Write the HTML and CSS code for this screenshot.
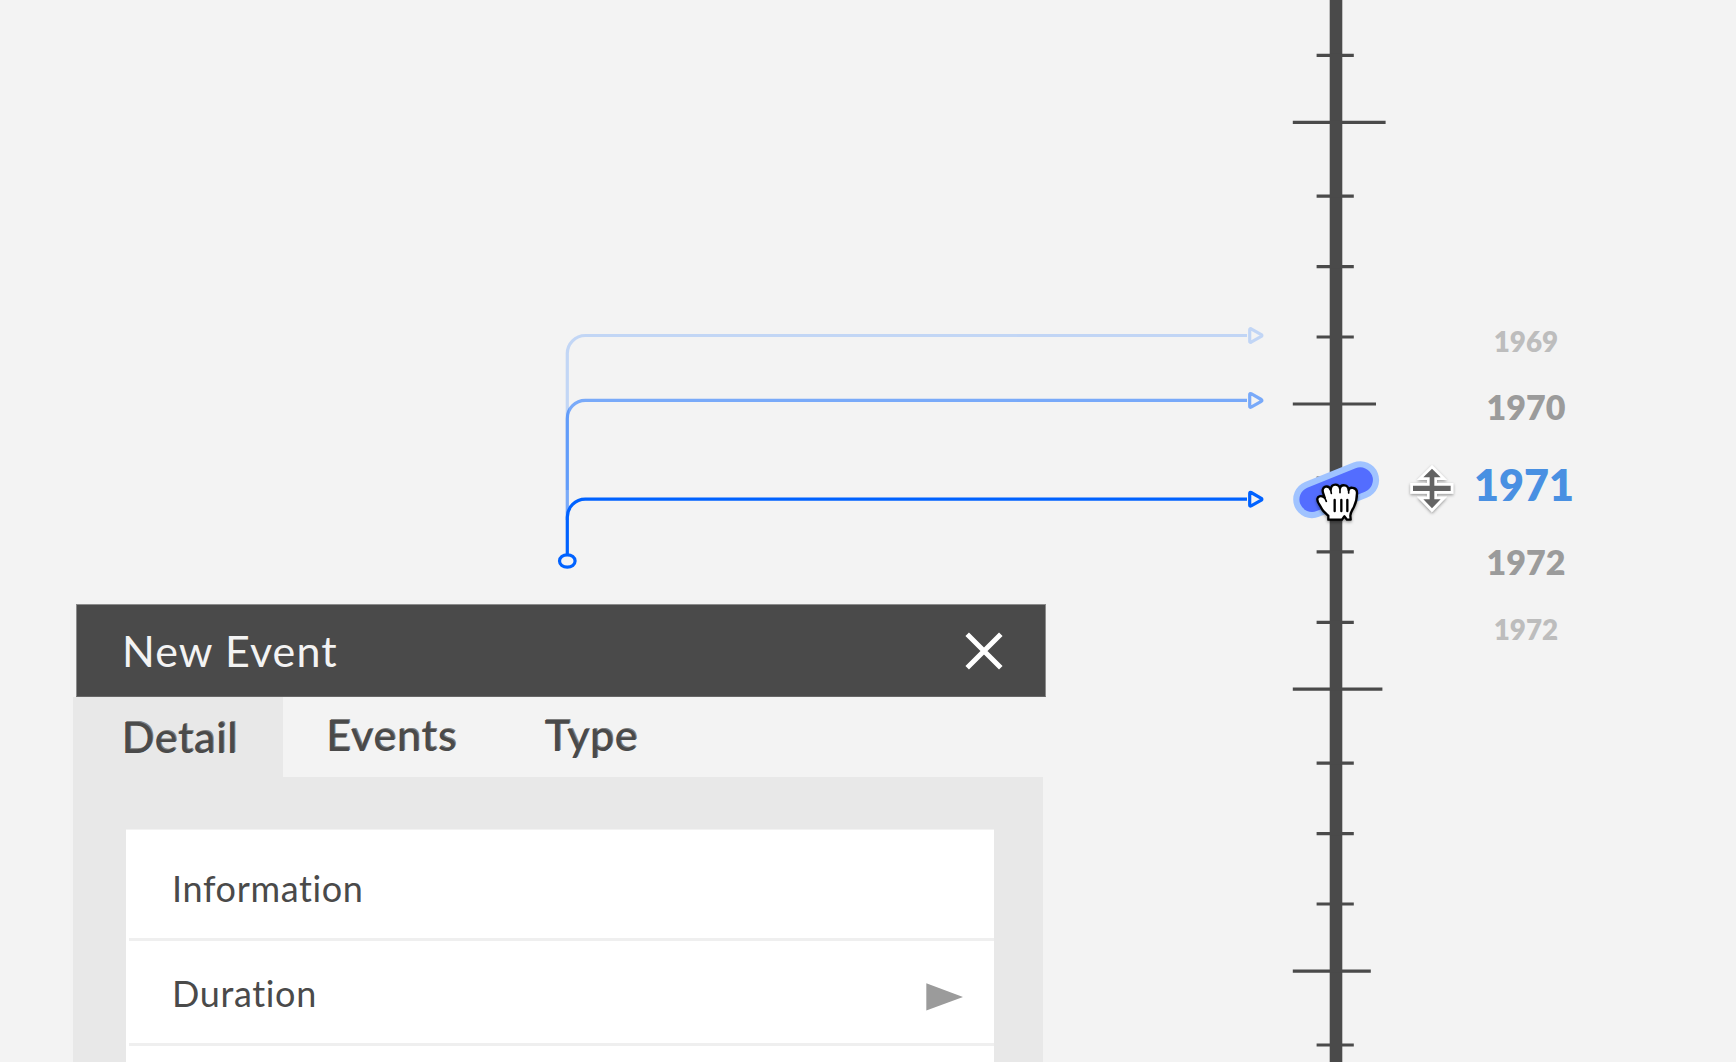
FILE: index.html
```html
<!DOCTYPE html>
<html lang="en">
<head>
<meta charset="utf-8">
<title>New Event</title>
<link rel="stylesheet" href="styles.css">
</head>
<body>
<main class="scene">
  <section class="workspace">
    <svg class="connectors" width="1280" height="604" viewBox="0 0 1280 604" fill="none" stroke="#0062ff" stroke-width="3.2" stroke-linejoin="round">
      <g opacity=".2">
        <path d="M567.3 490V353.5a18 18 0 0 1 18-18H1247"/>
        <path d="M1249.7 329.7v11.6q0 1.5 1.4.9l10.2-5.8q1.2-.9 0-1.8l-10.2-5.8q-1.4-.6-1.4.9z"/>
      </g>
      <g opacity=".5">
        <path d="M567.3 520V418.4a18 18 0 0 1 18-18H1247"/>
        <path d="M1249.7 394.6v11.6q0 1.5 1.4.9l10.2-5.8q1.2-.9 0-1.8l-10.2-5.8q-1.4-.6-1.4.9z"/>
      </g>
      <path d="M567.3 554V517.2a18 18 0 0 1 18-18H1247"/>
      <path d="M1249.7 493.4v11.6q0 1.5 1.4.9l10.2-5.8q1.2-.9 0-1.8l-10.2-5.8q-1.4-.6-1.4.9z"/>
      <ellipse cx="567.3" cy="561" rx="7.8" ry="6.2"/>
    </svg>
    <div class="dialog">
      <header class="dialog-header">
        <h1 class="dialog-title">New Event</h1>
        <svg class="close" width="40" height="40" viewBox="0 0 40 40" stroke="#fff" stroke-width="5"><path d="M3.2 3.2 36.8 36.8M36.8 3.2 3.2 36.8"/></svg>
      </header>
      <div class="dialog-body">
        <nav class="tabs">
          <span class="tab tab-active">Detail</span>
          <span class="tab tab-events">Events</span>
          <span class="tab tab-type">Type</span>
        </nav>
        <div class="panel">
          <div class="card">
            <div class="row row-first"><span>Information</span></div>
            <div class="row"><span>Duration</span>
              <svg class="play" width="37" height="28" viewBox="0 0 37 28"><path d="M.3 .2 37 14 .3 27.6z" fill="#9b9b9b"/></svg>
            </div>
            <div class="row"></div>
          </div>
        </div>
      </div>
    </div>
  </section>
  <svg class="timeline" width="180" height="1062" viewBox="1280 0 180 1062">
    <defs>
      <filter id="shadow" x="-30%" y="-30%" width="160%" height="170%"><feDropShadow dx="0" dy="4" stdDeviation="4" flood-color="#000" flood-opacity=".4"/></filter>
    </defs>
    <path d="M1336 0V1062" stroke="#4a4a4a" stroke-width="12.6"/>
    <g stroke="#4a4a4a" stroke-width="3.2">
      <path d="M1316.6 55.4h37.2M1316.6 196.2h37.2M1316.6 266.6h37.2M1316.6 337h37.2M1316.6 478h37.2M1316.6 551.8h37.2M1316.6 622.3h37.2M1316.6 763.1h37.2M1316.6 833.6h37.2M1316.6 904h37.2M1316.6 1045h37.2"/>
      <path d="M1292.8 122.4h92.8M1292.8 404h83.2M1292.8 689.2h89.6M1292.8 971.2h78"/>
    </g>
    <g stroke-linecap="round">
      <path d="M1312 499.4 1360.3 480" stroke="#a0c3ff" stroke-width="37.6"/>
      <path d="M1312 499.4 1360.3 480" stroke="#536dff" stroke-width="25.2"/>
    </g>
    <g transform="translate(1270 440) scale(.33333)">
      <g filter="url(#shadow)" stroke="#000" stroke-width="7" stroke-linejoin="round" stroke-linecap="round">
        <path fill="#fff" d="M175 239V227C166 219 158 213 154 204C149 193 141 187 142 177C143 169 152 166 161 171L164 173L160 161C156 151 158 143 166 140C173 138 179 142 182 149C183 139 187 134 196 134C204 134 208 138 210 145C211 138 216 135 224 136C232 137 235 142 236 150C238 144 243 142 250 144C258 146 261 151 261 159C261 177 257 190 252 200C246 212 241 218 241 227L242 239H231L223 229L216 239Z"/>
        <path fill="none" d="M182 149 184 160M210 145V158M236 150V159M164 173 169 184" stroke-width="5"/>
        <path d="M194 180V213M214 180V213M232 180V213"/>
      </g>
      <g filter="url(#shadow)">
        <path d="M486 86 512 112H493V137H542V153H493V178H512L486 205 460 178H479V153H429V137H479V112H460Z" fill="#646464" stroke="#fff" stroke-width="16" paint-order="stroke"/>
      </g>
    </g>
  </svg>
  <aside class="years">
    <span class="year year-far">1969</span>
    <span class="year year-near">1970</span>
    <span class="year year-current">1971</span>
    <span class="year year-near year-after">1972</span>
    <span class="year year-far year-last">1972</span>
  </aside>
</main>
</body>
</html>
```
FILE: styles.css
```css
body {
  margin: 0;
  background: #f3f3f3;
  color: #4a4a4a;
  font-family: Lato, "Liberation Sans", sans-serif;
  font-variant-ligatures: none;
  overflow: hidden;
}
.scene {
  display: grid;
  grid-template-columns: 1280px 180px 1fr;
  width: 1736px;
  height: 1062px;
  overflow: hidden;
}
svg { display: block; flex: none; }
.workspace { display: flex; flex-direction: column; height: 1062px; overflow: hidden; }
.dialog { margin-left: 73px; width: 973px; flex: 1; display: flex; flex-direction: column; }
.dialog-header {
  box-sizing: border-box;
  height: 93px;
  margin-left: 3px;
  padding: 0 41px 0 45px;
  display: flex;
  align-items: center;
  justify-content: space-between;
  background: #4a4a4a;
  border: 1px solid #8b8b8b;
  border-bottom-color: #666;
}
.dialog-title {
  margin: 0;
  font-size: 43px;
  font-weight: 400;
  line-height: 60px;
  letter-spacing: 1.1px;
  color: #f3f3f3;
}
.dialog-body { flex: 1; width: 970px; display: flex; flex-direction: column; }
.tabs { display: flex; height: 80px; line-height: 76px; font-size: 43px; font-weight: 500; letter-spacing: 0.6px; }
.tab { text-shadow: 1px -1px 0 #808080; white-space: nowrap; }
.tab-active { box-sizing: border-box; width: 210px; padding: 2px 0 0 48.5px; background: #e8e8e8; }
.tab-events { width: 218.5px; padding-left: 43px; letter-spacing: 0.8px; }
.panel { flex: 1; display: flex; padding: 52px 49.5px 0 53px; background: #e8e8e8; }
.card { flex: 1; background: #fff; border-top: 1px solid #f2f2f2; }
.row {
  box-sizing: border-box;
  height: 105px;
  margin-left: 3px;
  padding: 1px 31px 0 43px;
  display: flex;
  align-items: center;
  justify-content: space-between;
  border-bottom: 3px solid #efefef;
  font-size: 36px;
  line-height: 50px;
  letter-spacing: 0.65px;
}
.row-first { height: 111px; padding-top: 7px; }
.play { margin-top: 9px; }
.years { display: flex; flex-direction: column; align-items: center; width: 132px; padding-top: 322px; font-weight: 800; }
.year-far { font-size: 27.8px; line-height: 40px; color: #bdbdbd; }
.year-near { font-size: 34px; line-height: 40px; margin-top: 25px; color: #9b9b9b; }
.year-current { font-size: 43px; line-height: 50px; margin: 33px 4px 0 0; color: #4990e2; }
.year-after { margin-top: 32px; }
.year-last { margin-top: 28px; }
```
